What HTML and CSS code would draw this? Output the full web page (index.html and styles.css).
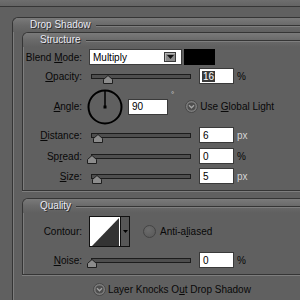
FILE: index.html
```html
<!DOCTYPE html>
<html>
<head>
<meta charset="utf-8">
<link rel="stylesheet" href="styles.css">
</head>
<body>
<div class="topband"></div>
<section class="group outer">
  <div class="hdr"><span class="title">Drop Shadow</span><span class="rule"></span></div>

  <section class="group inner">
    <div class="hdr"><span class="title">Structure</span><span class="rule"></span></div>
    <div class="body structure">
      <div class="row r-blend">
        <span class="lbl">Blend <u>M</u>ode:</span>
        <div class="select">
          <span class="sel-text">Multiply</span>
          <span class="sel-btn"><svg width="7" height="4" viewBox="0 0 7 4"><path d="M0 0H7L3.5 4Z" fill="#111"/></svg></span>
        </div>
        <div class="swatch"></div>
      </div>

      <div class="row r-opacity">
        <span class="lbl"><u>O</u>pacity:</span>
        <div class="slider"><div class="track"></div><svg class="thumb" style="left:12px" width="10" height="9" viewBox="0 0 10 9"><path d="M0.5 8.5V4.5L5 0.5L9.5 4.5V8.5Z" fill="#8c8c8c" stroke="#1e1e1e"/></svg></div>
        <div class="field"><span class="hl">16</span></div>
        <span class="unit">%</span>
      </div>

      <div class="row r-angle">
        <span class="lbl"><u>A</u>ngle:</span>
        <svg class="dial" width="36" height="36" viewBox="0 0 36 36"><circle cx="18" cy="18" r="16.5" fill="none" stroke="#000" stroke-width="2"/><path d="M18 18V2" stroke="#000" stroke-width="1.5"/><rect x="16.5" y="16.5" width="3" height="3" fill="#000"/></svg>
        <div class="field wide">90</div>
        <span class="deg">°</span>
        <svg class="radio" width="13" height="13" viewBox="0 0 13 13"><circle cx="6.5" cy="6.5" r="6" fill="#7c7c7c" stroke="#474747"/><circle cx="6.5" cy="6.5" r="4" fill="#4e4e4e"/><path d="M4 5.3L6.5 7.8L9 5.3" fill="none" stroke="#a4a4a4" stroke-width="1.3"/></svg>
        <span class="opt">Use <u>G</u>lobal Light</span>
      </div>

      <div class="row r-distance">
        <span class="lbl"><u>D</u>istance:</span>
        <div class="slider"><div class="track"></div><svg class="thumb" style="left:2px" width="10" height="9" viewBox="0 0 10 9"><path d="M0.5 8.5V4.5L5 0.5L9.5 4.5V8.5Z" fill="#8c8c8c" stroke="#1e1e1e"/></svg></div>
        <div class="field">6</div>
        <span class="unit light">px</span>
      </div>

      <div class="row r-spread">
        <span class="lbl">Sp<u>r</u>ead:</span>
        <div class="slider"><div class="track"></div><svg class="thumb" style="left:-4px" width="10" height="9" viewBox="0 0 10 9"><path d="M0.5 8.5V4.5L5 0.5L9.5 4.5V8.5Z" fill="#8c8c8c" stroke="#1e1e1e"/></svg></div>
        <div class="field">0</div>
        <span class="unit">%</span>
      </div>

      <div class="row r-size">
        <span class="lbl"><u>S</u>ize:</span>
        <div class="slider"><div class="track"></div><svg class="thumb" style="left:1px" width="10" height="9" viewBox="0 0 10 9"><path d="M0.5 8.5V4.5L5 0.5L9.5 4.5V8.5Z" fill="#8c8c8c" stroke="#1e1e1e"/></svg></div>
        <div class="field">5</div>
        <span class="unit light">px</span>
      </div>
    </div>
  </section>

  <section class="group inner quality-box">
    <div class="hdr"><span class="title">Quality</span><span class="rule"></span></div>
    <div class="body quality">
      <div class="row r-contour">
        <span class="lbl">Contour:</span>
        <div class="contour">
          <svg width="30" height="29" viewBox="0 0 30 29"><rect width="30" height="29" fill="#fff"/><path d="M2 29L29 1V29Z" fill="#333"/></svg>
          <span class="contour-arrow"><svg width="5" height="3" viewBox="0 0 5 3"><path d="M0 0H5L2.5 3Z" fill="#000"/></svg></span>
        </div>
        <svg class="radio aa" width="13" height="13" viewBox="0 0 13 13"><defs><radialGradient id="g" cx="0.4" cy="0.35" r="0.7"><stop offset="0" stop-color="#6c6c6c"/><stop offset="1" stop-color="#5a5a5a"/></radialGradient></defs><circle cx="6.5" cy="6.5" r="6" fill="url(#g)" stroke="#444"/></svg>
        <span class="opt">Anti-a<u>l</u>iased</span>
      </div>

      <div class="row r-noise">
        <span class="lbl"><u>N</u>oise:</span>
        <div class="slider"><div class="track"></div><svg class="thumb" style="left:-4px" width="10" height="9" viewBox="0 0 10 9"><path d="M0.5 8.5V4.5L5 0.5L9.5 4.5V8.5Z" fill="#8c8c8c" stroke="#1e1e1e"/></svg></div>
        <div class="field">0</div>
        <span class="unit">%</span>
      </div>
    </div>
  </section>

  <div class="row knock">
    <svg class="radio" width="13" height="13" viewBox="0 0 13 13"><circle cx="6.5" cy="6.5" r="6" fill="#7c7c7c" stroke="#474747"/><circle cx="6.5" cy="6.5" r="4" fill="#4e4e4e"/><path d="M4 5.3L6.5 7.8L9 5.3" fill="none" stroke="#a4a4a4" stroke-width="1.3"/></svg>
    <span class="opt">Layer Knocks O<u>u</u>t Drop Shadow</span>
  </div>
</section>
</body>
</html>
```

FILE: styles.css
```css
* { box-sizing: border-box; }
html, body { margin: 0; padding: 0; }
body {
  width: 300px;
  height: 300px;
  overflow: hidden;
  background: #606060;
  font-family: "Liberation Sans", Arial, sans-serif;
  font-size: 10px;
  color: #080808;
}
u { text-decoration-thickness: 1px; text-underline-offset: 1px; }

.topband {
  height: 7px;
  background: linear-gradient(#6e6e6e, #646464);
  border-bottom: 1px solid #363636;
}

.group {
  border-top: 1px solid #353535;
  border-left: 1px solid #353535;
  border-top-left-radius: 6px;
  box-shadow: inset 1px 1px 0 #7e7e7e;
}
.outer {
  margin: 10px 0 0 12px;
  height: 283px;
  overflow: hidden;
}
.inner {
  margin-left: 9px;
  border-bottom: 1px solid #353535;
  box-shadow: inset 1px 1px 0 #7e7e7e, 0 1px 0 #7e7e7e;
}
.quality-box { margin-top: 7px; }

.hdr {
  height: 14px;
  display: flex;
  align-items: center;
  padding-left: 17px;
  border-top-left-radius: 5px;
  background: linear-gradient(#7a7a7a, #6a6a6a 50%, #606060);
}
.title {
  color: #e9e9f2;
  text-shadow: 1px 1px 0 #2c2c2c;
  line-height: 14px;
  white-space: nowrap;
}
.rule {
  flex: 1;
  align-self: flex-start;
  margin: 7px 0 0 5px;
  border-top: 1px solid #353535;
  border-bottom: 1px solid #7e7e7e;
}

.body { display: flex; flex-direction: column; }
.structure { height: 143px; padding-top: 2px; }
.quality { height: 61px; padding-top: 3px; }

.row {
  display: flex;
  align-items: center;
  height: 16px;
  flex-shrink: 0;
  white-space: nowrap;
}
.r-opacity { margin-top: 3px; }
.r-angle { margin-top: 3px; height: 39px; }
.r-distance { margin-top: 1px; }
.r-spread { margin-top: 5px; }
.r-size { margin-top: 4px; }
.r-contour { height: 31px; }
.r-noise { margin-top: 5px; }

.lbl {
  width: 59px;
  margin-right: 7px;
  text-align: right;
}

.select {
  width: 93px;
  height: 16px;
  background: #fff;
  border: 1px solid #3c3c3c;
  display: flex;
  align-items: center;
  padding-left: 3px;
}
.sel-text { flex: 1; color: #000; }
.sel-btn {
  width: 12px;
  height: 10px;
  margin-right: 5px;
  background: #8a8a8a;
  border: 1px solid #3a3a3a;
  box-shadow: inset 1px 1px 0 #b4b4b4;
  display: flex;
  align-items: center;
  justify-content: center;
}
.swatch {
  width: 31px;
  height: 16px;
  margin-left: 2px;
  background: #000;
}

.slider {
  position: relative;
  width: 100px;
  height: 16px;
  margin: 0 8px 0 2px;
  padding-top: 6px;
}
.track {
  height: 5px;
  border: 1px solid #1c1c1c;
  background: #4e4e4e;
}
.thumb { position: absolute; top: 7px; }

.field {
  width: 35px;
  height: 16px;
  background: #fff;
  border: 1px solid #3a3a3a;
  padding-left: 3px;
  display: flex;
  align-items: center;
  color: #000;
}
.field.wide { width: 40px; margin-left: 5px; }
.hl {
  background: #3a3a3a;
  color: #fff;
  line-height: 11px;
  padding: 0 1px;
  margin-left: -1px;
}
.unit { margin-left: 3px; }
.unit.light { color: #d4d4d4; }

.dial { margin-left: -2px; }
.deg {
  align-self: flex-start;
  margin: 3px 0 0 3px;
  color: #d8d8d8;
  font-size: 8px;
}
.r-angle .radio { margin-left: 11px; }
.opt { margin-left: 2px; }

.contour {
  width: 41px;
  height: 31px;
  border: 1px solid #111;
  display: flex;
}
.contour-arrow {
  flex: 1;
  background: #575757;
  border-left: 1px solid #111;
  display: flex;
  align-items: center;
  justify-content: center;
}
.radio.aa { margin-left: 13px; }
.r-contour .opt { margin-left: 4px; }

.knock {
  margin: 7px 0 0 80px;
  height: 15px;
}
.knock .opt { margin-left: 2px; }
```
